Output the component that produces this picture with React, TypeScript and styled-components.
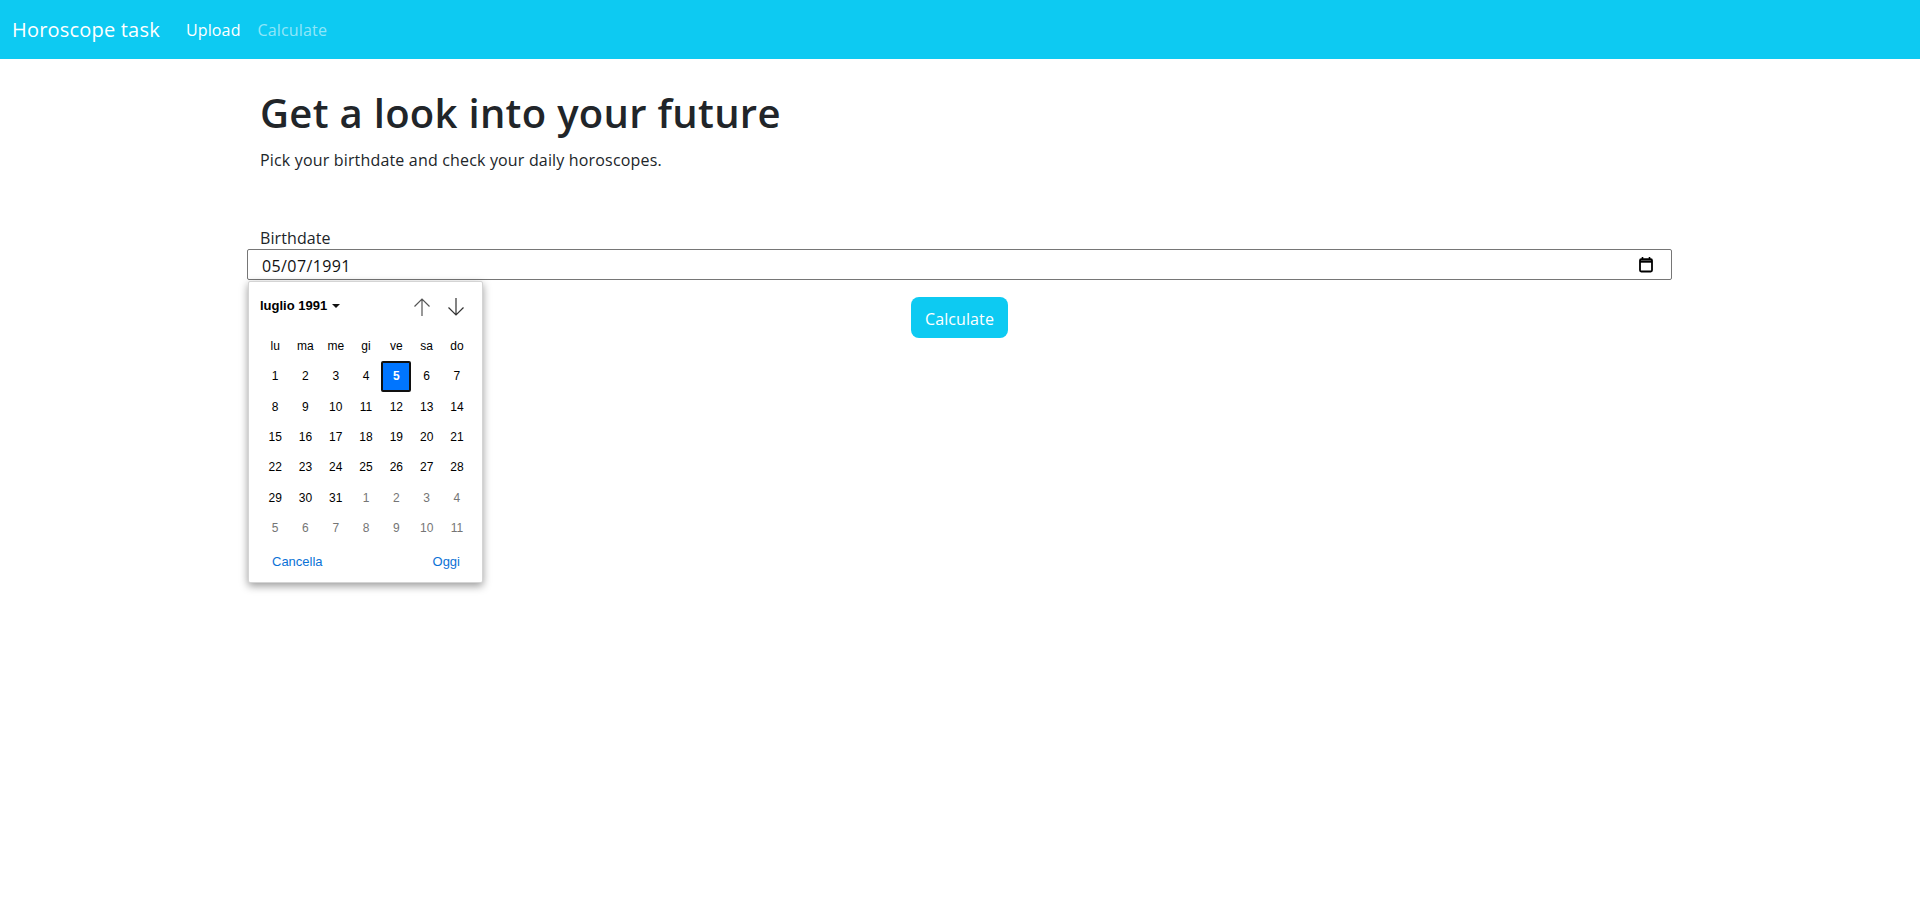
import React from 'react';
import styled, { createGlobalStyle } from 'styled-components';

const WEEKDAYS = ['lu', 'ma', 'me', 'gi', 've', 'sa', 'do'];

// 6 rows of 7, starting on monday 1 july 1991
const DAYS = [
  ...Array.from({ length: 31 }, (_, i) => ({ day: i + 1, muted: false })),
  ...Array.from({ length: 11 }, (_, i) => ({ day: i + 1, muted: true })),
];

const GlobalStyle = createGlobalStyle`
  html, body, #root {
    height: 100%;
    margin: 0;
    padding: 0;
    background: #fff;
  }

  body {
    font-family: "Open Sans", "Noto Sans", sans-serif;
    color: #212529;
  }

  * {
    box-sizing: border-box;
  }
`;

const Navbar = styled.nav`
  display: flex;
  align-items: center;
  height: 59px;
  padding: 0 12px;
  background-color: #0dcaf2;
`;

const Brand = styled.a`
  margin-right: 26px;
  font-size: 20px;
  letter-spacing: 0.2px;
  color: #fff;
`;

const NavLink = styled.a<{ $disabled?: boolean }>`
  margin-right: 17px;
  font-size: 16px;
  letter-spacing: 0.15px;
  color: ${({ $disabled }) => ($disabled ? 'rgba(255, 255, 255, 0.55)' : '#fff')};
`;

const Main = styled.main`
  width: 1425px;
  margin-left: 247px;
`;

const Intro = styled.header`
  padding: 30px 13px 0;
`;

const Title = styled.h1`
  margin: 0;
  font-size: 40px;
  line-height: 48px;
  font-weight: 600;
  letter-spacing: 0.3px;
  color: #212529;
`;

const Lead = styled.p`
  margin: 11px 0 0;
  font-size: 16px;
  line-height: 24px;
  letter-spacing: 0.17px;
`;

const Form = styled.form`
  display: flex;
  flex-direction: column;
  margin-top: 55px;
`;

const Label = styled.label`
  padding-left: 13px;
  font-size: 16px;
  line-height: 22px;
  letter-spacing: 0.1px;
`;

const Field = styled.div`
  position: relative;
  height: 31px;
`;

const DateInput = styled.div`
  display: flex;
  align-items: center;
  justify-content: space-between;
  height: 31px;
  padding: 0 18px 0 14px;
  border: 1px solid #767676;
  border-radius: 2px;
  background: #fff;
  font-size: 16px;
  letter-spacing: 0.4px;
  color: #111;

  span {
    padding-top: 2px;
  }
`;

const Picker = styled.div`
  position: absolute;
  top: 32px;
  left: 1px;
  width: 235px;
  height: 302px;
  padding: 0 11px;
  border-radius: 2px;
  border: 1px solid #d4d4d4;
  background: #fff;
  box-shadow: 0 3px 8px rgba(0, 0, 0, 0.4);
  font-family: "Liberation Sans", Arial, sans-serif;
  color: #000;
`;

const PickerHeader = styled.div`
  display: flex;
  align-items: center;
  justify-content: space-between;
  height: 48px;
`;

const MonthButton = styled.div`
  display: flex;
  align-items: center;
  gap: 5px;
  margin-top: -2px;
  font-size: 13px;
  font-weight: 700;
`;

const Caret = styled.span`
  width: 0;
  height: 0;
  margin-top: 1px;
  border-left: 4px solid transparent;
  border-right: 4px solid transparent;
  border-top: 4px solid #111;
`;

const Arrows = styled.div`
  display: flex;
  gap: 16px;
  padding-right: 6px;
  padding-top: 2px;
`;

const DayGrid = styled.div`
  display: grid;
  grid-template-columns: repeat(7, 30.3px);
  grid-auto-rows: 30.3px;
  margin-top: 1px;
`;

const Cell = styled.div<{ $muted?: boolean; $selected?: boolean }>`
  display: flex;
  align-items: center;
  justify-content: center;
  font-size: 12px;
  font-weight: ${({ $selected }) => ($selected ? 700 : 400)};
  color: ${({ $muted, $selected }) => ($selected ? '#fff' : $muted ? '#757575' : '#000')};
  background: ${({ $selected }) => ($selected ? '#0075ff' : 'transparent')};
  border: ${({ $selected }) => ($selected ? '2px solid #101010' : 'none')};
  border-radius: 2px;
`;

const PickerFooter = styled.div`
  display: flex;
  justify-content: space-between;
  margin-top: 11px;
  padding: 0 11px 0 12px;
  font-size: 13px;
  color: #0b72d6;
`;

const Actions = styled.div`
  display: flex;
  justify-content: center;
  margin-top: 17px;
`;

const SubmitButton = styled.button`
  width: 97px;
  height: 41px;
  padding: 2px 0 0;
  border: none;
  border-radius: 8px;
  background-color: #0dcaf2;
  font-family: inherit;
  font-size: 16px;
  letter-spacing: 0.1px;
  color: #fff;
`;

const Arrow = ({ up }: { up?: boolean }) => (
  <svg width="18" height="20" viewBox="0 0 18 20" fill="none" stroke={up ? '#555' : '#333'} strokeWidth="1.2">
    {up ? <path d="M9 19V2M1.5 9.5L9 2l7.5 7.5" /> : <path d="M9 1v17M1.5 10.5L9 18l7.5-7.5" />}
  </svg>
);

const CalendarIcon = () => (
  <svg width="14" height="16" viewBox="0 0 14 16" fill="none">
    <path d="M3.5 0V3M10.5 0V3" stroke="#000" strokeWidth="1.6" />
    <rect x="1" y="2.2" width="12" height="12.3" rx="1.2" stroke="#000" strokeWidth="1.8" />
    <path d="M1 4.5H13" stroke="#000" strokeWidth="2.4" />
  </svg>
);

const App: React.FC = () => (
  <>
    <GlobalStyle />
    <Navbar>
      <Brand>Horoscope task</Brand>
      <NavLink>Upload</NavLink>
      <NavLink $disabled>Calculate</NavLink>
    </Navbar>
    <Main>
      <Intro>
        <Title>Get a look into your future</Title>
        <Lead>Pick your birthdate and check your daily horoscopes.</Lead>
      </Intro>
      <Form>
        <Label>Birthdate</Label>
        <Field>
          <DateInput>
            <span>05/07/1991</span>
            <CalendarIcon />
          </DateInput>
          <Picker>
            <PickerHeader>
              <MonthButton>
                luglio 1991
                <Caret />
              </MonthButton>
              <Arrows>
                <Arrow up />
                <Arrow />
              </Arrows>
            </PickerHeader>
            <DayGrid>
              {WEEKDAYS.map((name) => (
                <Cell key={name}>{name}</Cell>
              ))}
              {DAYS.map(({ day, muted }, i) => (
                <Cell key={i} $muted={muted} $selected={!muted && day === 5}>
                  {day}
                </Cell>
              ))}
            </DayGrid>
            <PickerFooter>
              <span>Cancella</span>
              <span>Oggi</span>
            </PickerFooter>
          </Picker>
        </Field>
        <Actions>
          <SubmitButton type="button">Calculate</SubmitButton>
        </Actions>
      </Form>
    </Main>
  </>
);

export default App;
